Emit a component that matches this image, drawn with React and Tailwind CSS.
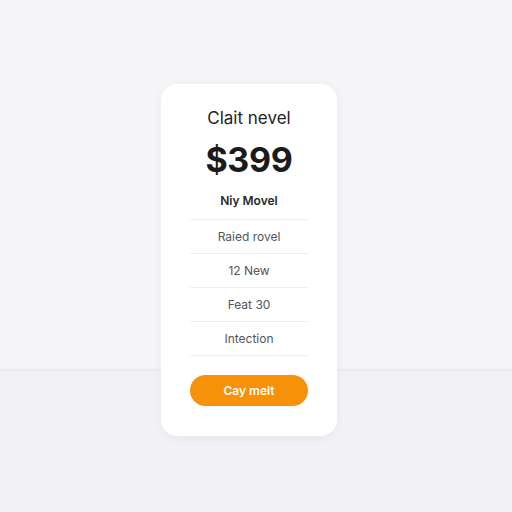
export default function App() {
  const features = ['Raied rovel', '12 New', 'Feat 30', 'Intection']

  return (
    <div
      className="w-full h-[512px] flex justify-center pt-[84px] pr-[14px] bg-[linear-gradient(to_bottom,#f5f5f8_369px,#ebebf0_369px,#ebebf0_371px,#f2f2f6_371px)]"
      style={{ fontFamily: 'Inter, "Noto Sans", sans-serif' }}
    >
      {/* Pricing card */}
      <div className="w-[176px] h-[352px] flex flex-col items-center bg-white rounded-[16px] px-[29px] pt-[24px] shadow-[0_2px_10px_rgba(40,40,80,0.06)]">
        <h2 className="text-[17px] leading-[20px] text-[#232323] font-normal">Clait nevel</h2>
        <div className="mt-[12px] text-[34px] leading-[40px] font-bold text-[#1b1b1b] tracking-[-0.3px]">$399</div>
        <div className="mt-[13px] text-[12px] leading-[16px] font-semibold text-[#2a2a2a]">Niy Movel</div>

        <ul className="w-full mt-[10px] border-t border-[#efeff1]">
          {features.map((f) => (
            <li
              key={f}
              className="h-[34px] flex items-center justify-center border-b border-[#efeff1] text-[12px] text-[#555]"
            >
              {f}
            </li>
          ))}
        </ul>

        <button className="mt-[19px] w-[118px] h-[31px] rounded-full bg-[#f7910a] text-white text-[12px] font-semibold">
          Cay melt
        </button>
      </div>
    </div>
  )
}
